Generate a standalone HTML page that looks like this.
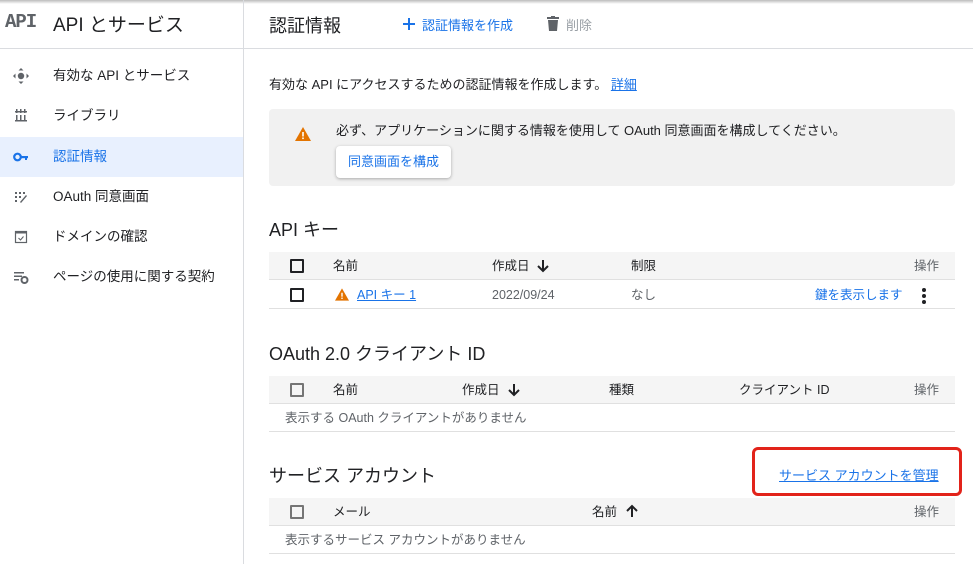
<!DOCTYPE html>
<html><head><meta charset="utf-8">
<style>
*{box-sizing:border-box;margin:0;padding:0}
body{width:973px;height:564px;overflow:hidden;background:#fff;font-family:"Liberation Sans","Noto Sans CJK JP",sans-serif;color:#202124;position:relative}
.a{position:absolute;white-space:nowrap}
.sh{position:absolute;left:0;top:0;width:973px;height:4px;background:linear-gradient(#bbb,#fff)}
.side{position:absolute;left:0;top:0;width:244px;height:564px;border-right:1px solid #dadce0}
.hline{position:absolute;left:0;top:48px;width:973px;height:1px;background:#dadce0}
.nav{position:absolute;left:0;width:243px;height:40px;font-size:13.5px;line-height:40px}
.nav span{position:absolute;left:53px}
.nav svg{position:absolute;left:13px;top:12px}
.sel{background:#e8f0fe;color:#1a73e8}
.th{position:absolute;left:269px;width:686px;height:28px;background:#f5f5f5;border-bottom:1px solid #e0e0e0;font-size:12.5px}
.tr{position:absolute;left:269px;width:686px;height:28px;border-bottom:1px solid #e0e0e0;font-size:12.5px}
.th .a,.tr .a{top:0;line-height:28px}
.cb{position:absolute;left:21px;top:7px;width:14px;height:14px;border:2px solid #202124;border-radius:1px}
.cb.g{border-color:#757575}
.h2{font-size:18px;color:#202124}
.link{color:#1a73e8}
</style></head><body>
<div class="sh"></div>
<div class="side"></div>
<div class="hline"></div>
<div class="a" style="left:5px;top:11px;font-family:'Liberation Mono',monospace;font-weight:bold;font-size:19px;color:#5f6368;letter-spacing:-1px">API</div>
<div class="a" style="left:53px;top:10px;font-size:19px">API とサービス</div>

<div class="nav" style="top:56px"><svg width="16" height="16" viewBox="0 0 16 16" fill="#5f6368"><path d="M8 0l2.5 2.5h-5zM8 16l2.5-2.5h-5zM0 8l2.5-2.5v5zM16 8l-2.5-2.5v5z"/><circle cx="8" cy="8" r="3.2"/></svg><span>有効な API とサービス</span></div>
<div class="nav" style="top:96px"><svg width="16" height="16" viewBox="0 0 16 16" fill="#5f6368"><rect x="2" y="3" width="12" height="1.5"/><rect x="2" y="12" width="12" height="1.5"/><rect x="3" y="1" width="1.5" height="4"/><rect x="7" y="1" width="1.5" height="4"/><rect x="11" y="1" width="1.5" height="4"/><rect x="3" y="7" width="1.5" height="6"/><rect x="7" y="7" width="1.5" height="6"/><rect x="11" y="7" width="1.5" height="6"/></svg><span>ライブラリ</span></div>
<div class="nav sel" style="top:137px"><svg width="16" height="16" viewBox="0 0 16 16" fill="#1a73e8"><circle cx="4.5" cy="8" r="3.3" fill="none" stroke="#1a73e8" stroke-width="2.2"/><rect x="7" y="7" width="8" height="2.2"/><rect x="12" y="7" width="2" height="4"/></svg><span>認証情報</span></div>
<div class="nav" style="top:177px"><svg width="16" height="16" viewBox="0 0 16 16" fill="#5f6368"><rect x="2" y="3" width="2" height="2"/><rect x="6" y="3" width="2" height="2"/><rect x="10" y="3" width="2" height="2"/><rect x="2" y="7" width="2" height="2"/><rect x="6" y="7" width="2" height="2"/><rect x="2" y="11" width="2" height="2"/><path d="M7 13l6-7 1 1-6 7z"/></svg><span>OAuth 同意画面</span></div>
<div class="nav" style="top:217px"><svg width="16" height="16" viewBox="0 0 16 16"><rect x="2.5" y="2.5" width="11" height="11" fill="none" stroke="#5f6368" stroke-width="1.2"/><rect x="2.5" y="2.5" width="11" height="2" fill="#5f6368"/><path d="M5.5 9l2 2 3-3.5" fill="none" stroke="#5f6368" stroke-width="1.1"/></svg><span>ドメインの確認</span></div>
<div class="nav" style="top:257px"><svg width="16" height="16" viewBox="0 0 16 16" fill="#5f6368"><rect x="1" y="3" width="10" height="1.5"/><rect x="1" y="6.5" width="8" height="1.5"/><rect x="1" y="10" width="5" height="1.5"/><circle cx="11.5" cy="11" r="3" fill="none" stroke="#5f6368" stroke-width="2"/></svg><span>ページの使用に関する契約</span></div>

<div class="a" style="left:269px;top:12px;font-size:18px">認証情報</div>
<svg class="a" style="left:402px;top:17px" width="14" height="14" viewBox="0 0 14 14"><path d="M7 1v12M1 7h12" stroke="#1a73e8" stroke-width="2"/></svg>
<div class="a link" style="left:422px;top:15px;font-size:13px">認証情報を作成</div>
<svg class="a" style="left:547px;top:16px" width="12" height="15" viewBox="0 0 12 15" fill="#5f6368"><rect x="0" y="1" width="12" height="2"/><rect x="4" y="0" width="4" height="2"/><path d="M1 4h10l-1 11H2z"/></svg>
<div class="a" style="left:566px;top:15px;font-size:13px;color:#9aa0a6">削除</div>

<div class="a" style="left:269px;top:74px;font-size:13px">有効な API にアクセスするための認証情報を作成します。 <span class="link" style="text-decoration:underline">詳細</span></div>

<div class="a" style="left:269px;top:109px;width:686px;height:77px;background:#f1f1f1;border-radius:4px"></div>
<svg class="a" style="left:295px;top:127px" width="16" height="14" viewBox="0 0 16 14"><path d="M8 0L16 14H0z" fill="#e37400"/><rect x="7.2" y="5" width="1.6" height="4.5" fill="#fff"/><rect x="7.2" y="10.5" width="1.6" height="1.6" fill="#fff"/></svg>
<div class="a" style="left:336px;top:120px;font-size:13px">必ず、アプリケーションに関する情報を使用して OAuth 同意画面を構成してください。</div>
<div class="a link" style="left:336px;top:146px;width:115px;height:32px;background:#fff;border-radius:4px;box-shadow:0 1px 3px rgba(0,0,0,.3);font-size:13px;line-height:32px;text-align:center">同意画面を構成</div>

<div class="a h2" style="left:269px;top:216px">API キー</div>
<div class="th" style="top:252px"><div class="cb"></div><div class="a" style="left:64px">名前</div><div class="a" style="left:223px">作成日</div><svg class="a" style="left:267px;top:7px" width="14" height="14" viewBox="0 0 14 14"><path d="M7 1v11M2 7l5 5 5-5" fill="none" stroke="#202124" stroke-width="2"/></svg><div class="a" style="left:362px">制限</div><div class="a" style="right:16px;color:#5f6368">操作</div></div>
<div class="tr" style="top:281px"><div class="cb"></div><svg class="a" style="left:66px;top:7px" width="14" height="13" viewBox="0 0 16 14"><path d="M8 0L16 14H0z" fill="#e37400"/><rect x="7.2" y="5" width="1.6" height="4.5" fill="#fff"/><rect x="7.2" y="10.5" width="1.6" height="1.6" fill="#fff"/></svg><div class="a link" style="left:88px;text-decoration:underline">API キー 1</div><div class="a" style="left:223px;color:#5f6368">2022/09/24</div><div class="a" style="left:362px;color:#5f6368">なし</div><div class="a link" style="left:546px">鍵を表示します</div><svg class="a" style="left:652px;top:6px" width="6" height="18" viewBox="0 0 6 18" fill="#202124"><circle cx="3" cy="3" r="2"/><circle cx="3" cy="9" r="2"/><circle cx="3" cy="15" r="2"/></svg></div>

<div class="a h2" style="left:269px;top:340px">OAuth 2.0 クライアント ID</div>
<div class="th" style="top:376px"><div class="cb g"></div><div class="a" style="left:64px">名前</div><div class="a" style="left:193px">作成日</div><svg class="a" style="left:238px;top:7px" width="14" height="14" viewBox="0 0 14 14"><path d="M7 1v11M2 7l5 5 5-5" fill="none" stroke="#202124" stroke-width="2"/></svg><div class="a" style="left:340px">種類</div><div class="a" style="left:470px">クライアント ID</div><div class="a" style="right:16px;color:#5f6368">操作</div></div>
<div class="tr" style="top:404px"><div class="a" style="left:16px;color:#5f6368">表示する OAuth クライアントがありません</div></div>

<div class="a h2" style="left:269px;top:462px">サービス アカウント</div>
<div class="a link" style="left:779px;top:465px;font-size:13px;text-decoration:underline">サービス アカウントを管理</div>
<div class="a" style="left:752px;top:447px;width:210px;height:49px;border:3px solid #e2231a;border-radius:6px"></div>
<div class="th" style="top:498px"><div class="cb g"></div><div class="a" style="left:64px">メール</div><div class="a" style="left:323px">名前</div><svg class="a" style="left:356px;top:6px" width="14" height="14" viewBox="0 0 14 14"><path d="M7 13V2M2 7l5-5 5 5" fill="none" stroke="#202124" stroke-width="2"/></svg><div class="a" style="right:16px;color:#5f6368">操作</div></div>
<div class="tr" style="top:526px"><div class="a" style="left:16px;color:#5f6368">表示するサービス アカウントがありません</div></div>
</body></html>
